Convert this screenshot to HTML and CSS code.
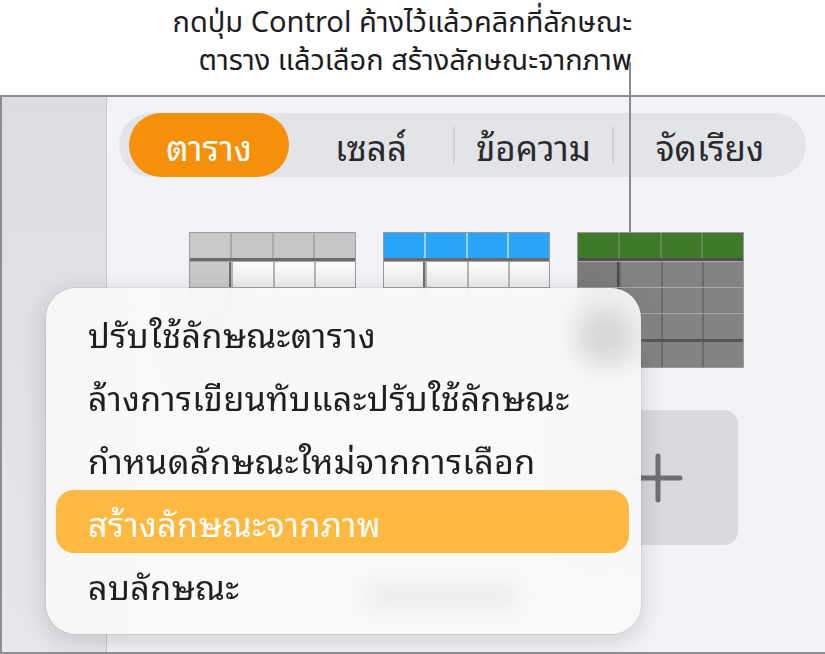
FILE: index.html
```html
<!DOCTYPE html>
<html lang="th">
<head>
    <meta charset="UTF-8">
    <title>ลักษณะตาราง</title>
    <link rel="stylesheet" href="styles.css">
</head>
<body>

<div class="callout">
    <p>กดปุ่ม Control ค้างไว้แล้วคลิกที่ลักษณะ</p>
    <p>ตาราง แล้วเลือก สร้างลักษณะจากภาพ</p>
    <span class="leader"></span>
</div>

<div class="window">
    <div class="sidebar"></div>

    <div class="inspector">
        <div class="tabs">
            <span class="tab active">ตาราง</span>
            <span class="tab cell">เซลล์</span>
            <span class="sep"></span>
            <span class="tab text">ข้อความ</span>
            <span class="sep"></span>
            <span class="tab arrange">จัดเรียง</span>
        </div>

        <div class="styles">
            <div class="thumb gray">
                <div class="row head"><i></i><i></i><i></i><i></i></div>
                <div class="row"><i></i><i></i><i></i><i></i></div>
                <div class="row"><i></i><i></i><i></i><i></i></div>
                <div class="row"><i></i><i></i><i></i><i></i></div>
                <div class="row foot"><i></i><i></i><i></i><i></i></div>
            </div>
            <div class="thumb blue">
                <div class="row head"><i></i><i></i><i></i><i></i></div>
                <div class="row"><i></i><i></i><i></i><i></i></div>
                <div class="row"><i></i><i></i><i></i><i></i></div>
                <div class="row"><i></i><i></i><i></i><i></i></div>
                <div class="row foot"><i></i><i></i><i></i><i></i></div>
            </div>
            <div class="thumb green">
                <div class="row head"><i></i><i></i><i></i><i></i></div>
                <div class="row"><i></i><i></i><i></i><i></i></div>
                <div class="row"><i></i><i></i><i></i><i></i></div>
                <div class="row"><i></i><i></i><i></i><i></i></div>
                <div class="row foot"><i></i><i></i><i></i><i></i></div>
            </div>
            <div class="add-style">
                <svg width="50" height="50" viewBox="0 0 50 50">
                    <path d="M25 3 V47 M3 25 H47" stroke="#6f6f73" stroke-width="5" stroke-linecap="round"/>
                </svg>
            </div>
        </div>
    </div>

    <!-- เมนูคลิกขวา -->
    <div class="menu">
        <span class="smudge dot"></span>
        <span class="smudge label"></span>
        <div class="item">ปรับใช้ลักษณะตาราง</div>
        <div class="item">ล้างการเขียนทับและปรับใช้ลักษณะ</div>
        <div class="item">กำหนดลักษณะใหม่จากการเลือก</div>
        <div class="item selected">สร้างลักษณะจากภาพ</div>
        <div class="item">ลบลักษณะ</div>
    </div>
</div>

</body>
</html>
```

FILE: styles.css
```css
body {
    margin: 0;
    background: #fff;
    font-family: "Noto Sans Thai Looped", "Loma", "Garuda", "Noto Sans Thai", sans-serif;
    color: #1d1d1f;
}

/* คำอธิบายด้านบน */
.callout {
    position: relative;
    height: 91px;
    padding: 4px 193px 0 0;
    text-align: right;
    font-family: "Noto Sans Thai", "Roboto", sans-serif;
}
.callout p {
    margin: 0;
    font-size: 29px;
    line-height: 38px;
}
.leader {
    position: absolute;
    left: 629px;
    top: 62px;
    width: 2px;
    height: 171px;
    background: #8c8c8c;
    z-index: 5;
}

.window {
    position: relative;
    display: flex;
    height: 555px;
    border-top: 2px solid #8d8d8f;
    border-bottom: 2px solid #8d8d8f;
    border-left: 2px solid #8d8d8f;
    overflow: hidden;
}
.sidebar {
    width: 104px;
    flex: none;
    background: linear-gradient(#dcdde1, #e6e7ea);
    border-right: 1px solid #c9cace;
}
.inspector {
    flex: 1;
    background: #f2f3f6;
    padding: 16px 0 0 12px;
}

/* แถบแท็บ */
.tabs {
    display: flex;
    align-items: center;
    width: 687px;
    height: 64px;
    border-radius: 32px;
    background: #e3e4e8;
}
.tab {
    font-size: 35px;
    color: #2a2a2c;
    line-height: 64px;
    text-align: center;
}
.tab.active {
    background: #f5900a;
    color: #fff;
    border-radius: 32px;
    margin-left: 10px;
    width: 160px;
}
.tab.cell { width: 164px; }
.tab.text { width: 157px; }
.tab.arrange { width: 192px; }
.sep {
    width: 2px;
    height: 36px;
    background: #cfd0d4;
}

/* ลักษณะตาราง */
.styles {
    display: grid;
    grid-template-columns: repeat(3, 167px);
    column-gap: 27px;
    align-items: start;
    margin: 55px 0 0 70px;
}
.thumb {
    border: 1px solid #9a9a9a;
    display: flex;
    flex-direction: column;
}
.row {
    display: flex;
    height: 25px;
    border-top: 1px solid #a8a8a8;
}
.row i {
    flex: 1;
    border-left: 2px solid #b4b4b4;
    background: linear-gradient(#fbfbfb, #ececec);
}
.row i:first-child {
    border-left: none;
    border-right: 2px solid #6d6d6d;
}
.row.head {
    border-top: none;
    border-bottom: 3px solid #6a6a6a;
}
.row.head i:first-child {
    border-right: none;
}
.row.foot {
    border-top: 3px solid #555;
}
.gray .row.head i { background: #c4c5c5; border-color: #a9a9a9; }
.gray .row i:first-child { background: #c9c9c9; }
.blue .row.head i { background: #2ba4fb; border-color: #9bd3fb; }
.green .row.head i { background: #3e7a2a; border-color: #5f8a50; }
.green .row i { background: #838383; border-color: #6a6a6a; }
.green .row i:first-child { background: #7c7c7c; border-right-color: #4a4a4a; }
.green .row.head i { background: #3e7a2a; }
.green .row.head { border-bottom-color: #4e4e4e; }

.add-style {
    grid-column: 3;
    justify-self: end;
    width: 160px;
    height: 135px;
    margin: 42px 6px 0 0;
    border-radius: 14px;
    background: #d9dadf;
    display: flex;
    align-items: center;
    justify-content: center;
}

/* เมนูคลิกขวา */
.menu {
    position: absolute;
    left: 44px;
    top: 191px;
    width: 595px;
    height: 346px;
    box-sizing: border-box;
    padding: 13px 12px 0 10px;
    border-radius: 30px;
    background: rgba(249, 249, 249, 0.93);
    backdrop-filter: blur(18px);
    box-shadow: 0 6px 26px rgba(0, 0, 0, 0.16), 0 0 0 0.5px rgba(0, 0, 0, 0.12);
    z-index: 3;
}
.item {
    font-size: 34px;
    letter-spacing: 0.4px;
    line-height: 63px;
    padding-left: 32px;
    color: #1f1f21;
    border-radius: 18px;
    position: relative;
}
.item.selected {
    background: #fdb941;
    color: #fff;
}
.smudge {
    position: absolute;
    background: #cfcfd1;
    filter: blur(12px);
}
.smudge.dot {
    right: 8px;
    top: 20px;
    width: 56px;
    height: 56px;
    border-radius: 50%;
    opacity: 0.8;
}
.smudge.label {
    left: 320px;
    bottom: 30px;
    width: 150px;
    height: 16px;
    opacity: 0.5;
}
```
